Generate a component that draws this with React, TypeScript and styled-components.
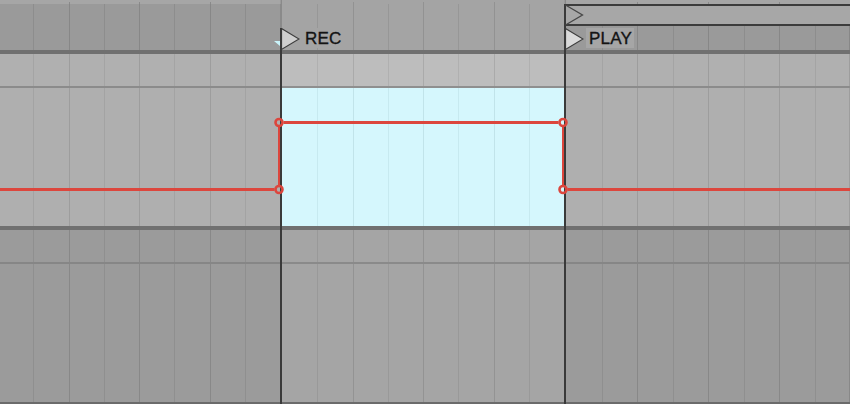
import React from 'react';
import styled, { createGlobalStyle } from 'styled-components';

const GlobalStyle = createGlobalStyle`
  html, body { margin: 0; padding: 0; background: #9a9a9a; overflow: hidden; }
  body { font-family: "Liberation Sans", Arial, sans-serif; }
`;

type Tone = { bg: string; minor: string; major: string };

const T = {
  topSide: { bg: '#a6a6a6', minor: 'transparent', major: '#8a8a8a' },
  topMid: { bg: '#a4a4a4', minor: 'transparent', major: '#929292' },
  rulerSide: { bg: '#9a9a9a', minor: '#8d8d8d', major: '#878787' },
  rulerMid: { bg: '#a4a4a4', minor: '#979797', major: '#929292' },
  rowSide: { bg: '#b0b0b0', minor: '#a4a4a4', major: '#9d9d9d' },
  rowMid: { bg: '#bdbdbd', minor: '#b0b0b0', major: '#aaaaaa' },
  laneSide: { bg: '#afafaf', minor: '#a3a3a3', major: '#9d9d9d' },
  laneMid: { bg: '#d5f7fd', minor: '#c7eaf0', major: '#c1e4ea' },
  lowSide: { bg: '#9b9b9b', minor: '#8f8f8f', major: '#888888' },
  lowMid: { bg: '#a5a5a5', minor: '#999999', major: '#939393' },
};

const Timeline = styled.div`
  width: 850px;
  height: 404px;
  display: flex;
  flex-direction: column;
  overflow: hidden;
`;

const Band = styled.div`
  display: flex;
  flex: none;
  position: relative;
`;

const Seg = styled.div<{ $w?: number; $bg: string; $h: number; $rule?: string; $ruleW?: number; $shift?: boolean }>`
  flex: ${(p) => (p.$w ? `0 0 ${p.$w}px` : '1 1 0')};
  min-width: 0;
  margin-left: ${(p) => (p.$shift ? '-2px' : '0')};
  height: ${(p) => p.$h}px;
  display: grid;
  grid-template-columns: repeat(8, minmax(0, 1fr));
  background: ${(p) => p.$bg};
  border-bottom: ${(p) => (p.$rule ? `${p.$ruleW ?? 2}px solid ${p.$rule}` : 'none')};
`;

const Cell = styled.div<{ $line?: string; $end?: string; $tick?: boolean; $align?: 'start' | 'end' }>`
  min-width: 0;
  display: flex;
  align-items: flex-end;
  justify-content: ${(p) => (p.$align === 'end' ? 'flex-end' : 'flex-start')};
  border-left: ${(p) => (p.$line && !p.$tick ? `1px solid ${p.$line}` : 'none')};
  border-right: ${(p) => (p.$end ? `1px solid ${p.$end}` : 'none')};
  background: ${(p) =>
    p.$tick && p.$line
      ? `linear-gradient(to bottom, transparent 2px, ${p.$line} 2px) left top / 1px 100% no-repeat`
      : 'none'};
`;

const Cursor = styled.div<{ $tone: 'dark' | 'faint' | 'split' }>`
  flex: 0 0 2px;
  background: ${(p) =>
    p.$tone === 'dark'
      ? '#3a3a3a'
      : p.$tone === 'faint'
      ? 'linear-gradient(to right, transparent 1px, #8a8a8a 1px)'
      : 'linear-gradient(to bottom, #8a8a8a 24px, #3a3a3a 24px)'};
`;

const RightRuler = styled.div`
  flex: 1 1 0;
  display: flex;
  flex-direction: column;
`;

const LoopBar = styled.div`
  height: 18px;
  border-top: 2px solid #3c3c3c;
  border-bottom: 2px solid #3c3c3c;
  background: #a7a7a7;
  display: flex;
  align-items: flex-start;
`;

const LoopFlag = styled.svg`
  margin-left: -1px;
  overflow: visible;
  display: block;
`;

const Marker = styled.div`
  position: relative;
  z-index: 1;
  display: flex;
  align-items: flex-start;
  height: 22px;
  margin-left: -2px;
`;

const FlagIcon = styled.svg`
  display: block;
  flex: none;
`;

const Label = styled.span<{ $bg: string }>`
  margin-left: 2px;
  padding: 0 2px 0 3px;
  height: 20px;
  line-height: 22px;
  font-size: 17px;
  color: #141414;
  -webkit-text-stroke: 0.35px #141414;
  letter-spacing: 0.2px;
  background: ${(p) => p.$bg};
  white-space: nowrap;
`;

const Nub = styled.svg`
  display: block;
  margin-bottom: 4px;
`;

const Automation = styled.svg`
  position: absolute;
  left: 0;
  top: 0;
  pointer-events: none;
`;

type CellsProps = {
  tone: Tone;
  tick?: boolean;
  end?: boolean;
  first?: React.ReactNode;
  last?: React.ReactNode;
};

function cells({ tone, tick, end, first, last }: CellsProps) {
  return Array.from({ length: 8 }, (_, i) => (
    <Cell
      key={i}
      $tick={tick}
      $line={i === 0 ? undefined : i % 2 === 0 ? tone.major : tone.minor}
      $end={end && i === 7 ? tone.major : undefined}
      $align={i === 7 ? 'end' : 'start'}
    >
      {i === 0 ? first : null}
      {i === 7 ? last : null}
    </Cell>
  ));
}

function Flag({ fill }: { fill: string }) {
  return (
    <FlagIcon width="20" height="22" viewBox="0 0 20 22">
      <polygon points="1.5,0.6 19,11 1.5,21.4" fill={fill} stroke="#3d3d3d" strokeWidth="1.2" />
      <rect x="0" y="0" width="2" height="22" fill="#3a3a3a" />
    </FlagIcon>
  );
}

function TimeMarker({ text, fill, labelBg }: { text: string; fill: string; labelBg: string }) {
  return (
    <Marker>
      <Flag fill={fill} />
      <Label $bg={labelBg}>{text}</Label>
    </Marker>
  );
}

const RED = '#dc463d';

export default function App() {
  return (
    <>
      <GlobalStyle />
      <Timeline>
        {/* top strip */}
        <Band>
          <Seg $shift $w={282} $h={4} $bg={T.topSide.bg}>{cells({ tone: T.topSide, tick: true })}</Seg>
          <Cursor $tone="faint" />
          <Seg $w={282} $h={4} $bg={T.topMid.bg}>{cells({ tone: T.topMid, tick: true })}</Seg>
          <Cursor $tone="faint" />
          <Seg $h={4} $bg={T.topSide.bg}>{cells({ tone: T.topSide, tick: true })}</Seg>
        </Band>

        {/* ruler with markers */}
        <Band>
          <Seg $shift $w={282} $h={46} $bg={T.rulerSide.bg} $rule="#707070" $ruleW={4}>
            {cells({
              tone: T.rulerSide,
              last: (
                <Nub width="6" height="5" viewBox="0 0 6 5">
                  <polygon points="0,0 6,0 6,5" fill="#c9f3fa" />
                </Nub>
              ),
            })}
          </Seg>
          <Cursor $tone="split" />
          <Seg $w={282} $h={46} $bg={T.rulerMid.bg} $rule="#707070" $ruleW={4}>
            {cells({
              tone: T.rulerMid,
              first: <TimeMarker text="REC" fill="#cfcfcf" labelBg={T.rulerMid.bg} />,
            })}
          </Seg>
          <Cursor $tone="dark" />
          <RightRuler>
            <LoopBar>
              <LoopFlag width="19" height="18" viewBox="0 0 19 18">
                <polyline points="0.5,-1 17.5,9 0.5,19" fill="none" stroke="#474747" strokeWidth="1.3" />
              </LoopFlag>
            </LoopBar>
            <Seg $h={24} $bg={T.rulerSide.bg} $rule="#707070" $ruleW={4}>
              {cells({
                tone: T.rulerSide,
                end: true,
                first: <TimeMarker text="PLAY" fill="#dadada" labelBg="#a6a6a6" />,
              })}
            </Seg>
          </RightRuler>
        </Band>

        {/* header row of lane */}
        <Band>
          <Seg $shift $w={282} $h={32} $bg={T.rowSide.bg} $rule="#8b8b8b">{cells({ tone: T.rowSide })}</Seg>
          <Cursor $tone="dark" />
          <Seg $w={282} $h={32} $bg={T.rowMid.bg} $rule="#8f8f8f">{cells({ tone: T.rowMid })}</Seg>
          <Cursor $tone="dark" />
          <Seg $h={32} $bg={T.rowSide.bg} $rule="#8b8b8b">{cells({ tone: T.rowSide, end: true })}</Seg>
        </Band>

        {/* automation lane */}
        <Band>
          <Seg $shift $w={282} $h={138} $bg={T.laneSide.bg} $rule="#707070" $ruleW={4}>{cells({ tone: T.laneSide })}</Seg>
          <Cursor $tone="dark" />
          <Seg $w={282} $h={138} $bg={T.laneMid.bg} $rule="#707070" $ruleW={4}>{cells({ tone: T.laneMid })}</Seg>
          <Cursor $tone="dark" />
          <Seg $h={138} $bg={T.laneSide.bg} $rule="#707070" $ruleW={4}>{cells({ tone: T.laneSide, end: true })}</Seg>
          <Automation width="850" height="138" viewBox="0 0 850 138">
            <g stroke={RED} fill="none">
              <line x1="0" y1="101.5" x2="274.5" y2="101.5" strokeWidth="3" />
              <line x1="279" y1="38.5" x2="279" y2="97.5" strokeWidth="2" />
              <line x1="283.5" y1="34.5" x2="558.5" y2="34.5" strokeWidth="3" />
              <line x1="563" y1="38.5" x2="563" y2="97.5" strokeWidth="2" />
              <line x1="567.5" y1="101.5" x2="850" y2="101.5" strokeWidth="3" />
              <circle cx="279" cy="34.5" r="3.5" strokeWidth="2.6" />
              <circle cx="279" cy="101.5" r="3.5" strokeWidth="2.6" />
              <circle cx="563" cy="34.5" r="3.5" strokeWidth="2.6" />
              <circle cx="563" cy="101.5" r="3.5" strokeWidth="2.6" />
            </g>
          </Automation>
        </Band>

        {/* lower track header row */}
        <Band>
          <Seg $shift $w={282} $h={32} $bg={T.lowSide.bg} $rule="#868686">{cells({ tone: T.lowSide })}</Seg>
          <Cursor $tone="dark" />
          <Seg $w={282} $h={32} $bg={T.lowMid.bg} $rule="#8a8a8a">{cells({ tone: T.lowMid })}</Seg>
          <Cursor $tone="dark" />
          <Seg $h={32} $bg={T.lowSide.bg} $rule="#868686">{cells({ tone: T.lowSide, end: true })}</Seg>
        </Band>

        {/* lower track body */}
        <Band>
          <Seg $shift $w={282} $h={138} $bg={T.lowSide.bg} $rule="#6b6b6b">{cells({ tone: T.lowSide })}</Seg>
          <Cursor $tone="dark" />
          <Seg $w={282} $h={138} $bg={T.lowMid.bg} $rule="#6b6b6b">{cells({ tone: T.lowMid })}</Seg>
          <Cursor $tone="dark" />
          <Seg $h={138} $bg={T.lowSide.bg} $rule="#6b6b6b">{cells({ tone: T.lowSide, end: true })}</Seg>
        </Band>
      </Timeline>
    </>
  );
}
